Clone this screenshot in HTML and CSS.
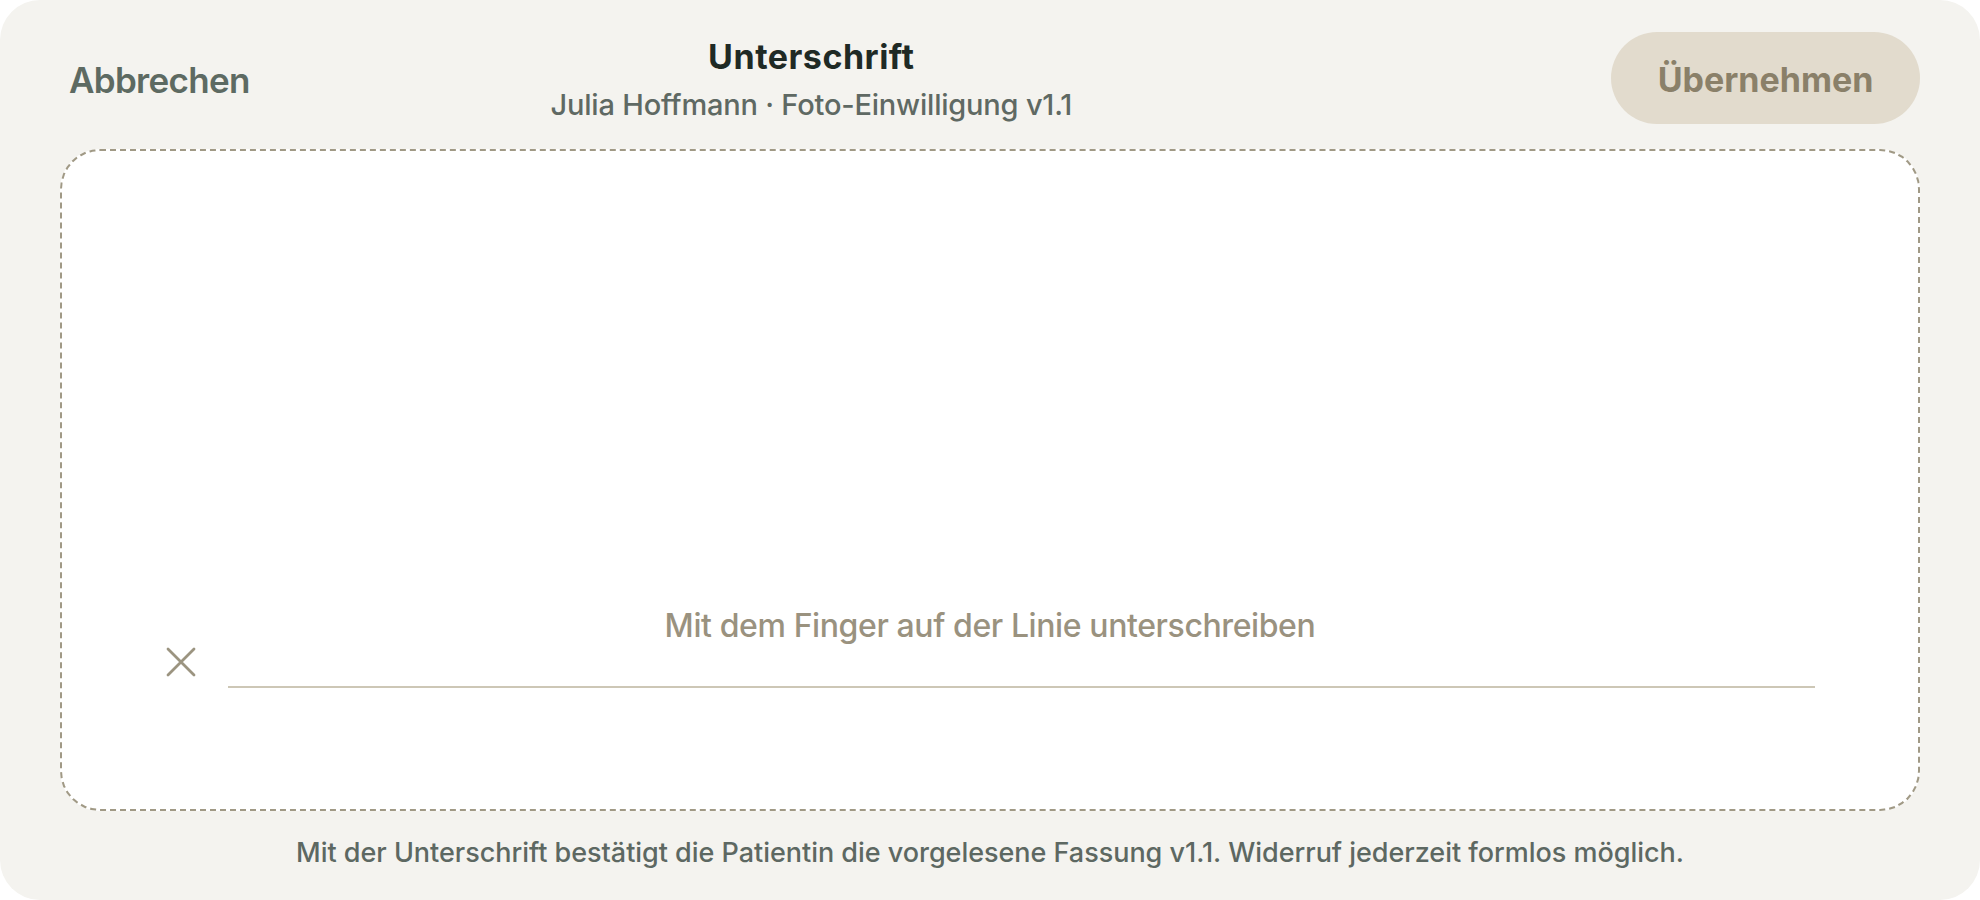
FILE: index.html
```html
<!DOCTYPE html>
<html lang="de">
<head>
<meta charset="utf-8">
<title>Unterschrift</title>
<link rel="stylesheet" href="styles.css">
</head>
<body>
<div class="sheet">
  <header class="top">
    <button class="cancel" type="button">Abbrechen</button>
    <div class="heading">
      <div class="title">Unterschrift</div>
      <div class="subtitle">Julia Hoffmann · Foto-Einwilligung v1.1</div>
    </div>
    <button class="apply" type="button">Übernehmen</button>
  </header>
  <section class="pad">
    <div class="hint">Mit dem Finger auf der Linie unterschreiben</div>
    <div class="sigrow">
      <svg class="xmark" viewBox="0 0 32 32" width="32" height="32" aria-hidden="true">
        <path d="M3 3 L29 29 M29 3 L3 29" stroke="#9b9480" stroke-width="2.8" stroke-linecap="round" fill="none"/>
      </svg>
      <div class="line"></div>
    </div>
  </section>
  <p class="note">Mit der Unterschrift bestätigt die Patientin die vorgelesene Fassung v1.1. Widerruf jederzeit formlos möglich.</p>
</div>
</body>
</html>
```
FILE: styles.css
```css
* { box-sizing: border-box; }
html, body { margin: 0; padding: 0; background: #ffffff; }
body { font-family: Inter, "Noto Sans", "Liberation Sans", sans-serif; }

.sheet {
  width: 1980px;
  height: 900px;
  background: #f4f3ef;
  border-radius: 40px;
  padding: 32px 60px 0;
  display: flex;
  flex-direction: column;
}

.top {
  height: 92px;
  display: flex;
  align-items: center;
}

.cancel {
  font-family: inherit;
  background: none;
  border: 0;
  padding: 4px 0 0 9px;
  margin: 0;
  font-size: 35px;
  line-height: 44px;
  font-weight: 600;
  color: #5d6a62;
  letter-spacing: -0.7px;
}

.heading {
  flex: 1;
  text-align: center;
  padding-right: 238px;
  padding-top: 6px;
}

.title {
  font-size: 34px;
  line-height: 40px;
  font-weight: 700;
  color: #1f2a25;
  letter-spacing: 0.5px;
}

.subtitle {
  margin-top: 8px;
  font-size: 29px;
  line-height: 40px;
  font-weight: 500;
  color: #5f6963;
  letter-spacing: -0.2px;
}

.apply {
  font-family: inherit;
  width: 309px;
  height: 92px;
  border: 0;
  border-radius: 46px;
  background: #e2dbcd;
  color: #8a8069;
  font-size: 34px;
  font-weight: 700;
  letter-spacing: 0;
  padding: 2px 0 0;
}

.pad {
  margin-top: 25px;
  height: 662px;
  background: #ffffff;
  border: 2px dashed #a09985;
  border-radius: 40px;
  display: flex;
  flex-direction: column;
  justify-content: flex-end;
  padding: 0 103px 121px;
}

.hint {
  text-align: center;
  font-size: 32px;
  line-height: 40px;
  font-weight: 500;
  color: #9a927f;
  letter-spacing: -0.4px;
}

.sigrow {
  display: flex;
  align-items: flex-end;
  gap: 31px;
}

.xmark {
  display: block;
  flex: none;
  margin-bottom: 10px;
}

.line {
  flex: 1;
  height: 2px;
  background: #cdc7b6;
}

.note {
  margin: 24px 0 0;
  text-align: center;
  font-size: 27px;
  line-height: 36px;
  font-weight: 500;
  color: #5d6862;
  letter-spacing: -0.03px;
}
```
